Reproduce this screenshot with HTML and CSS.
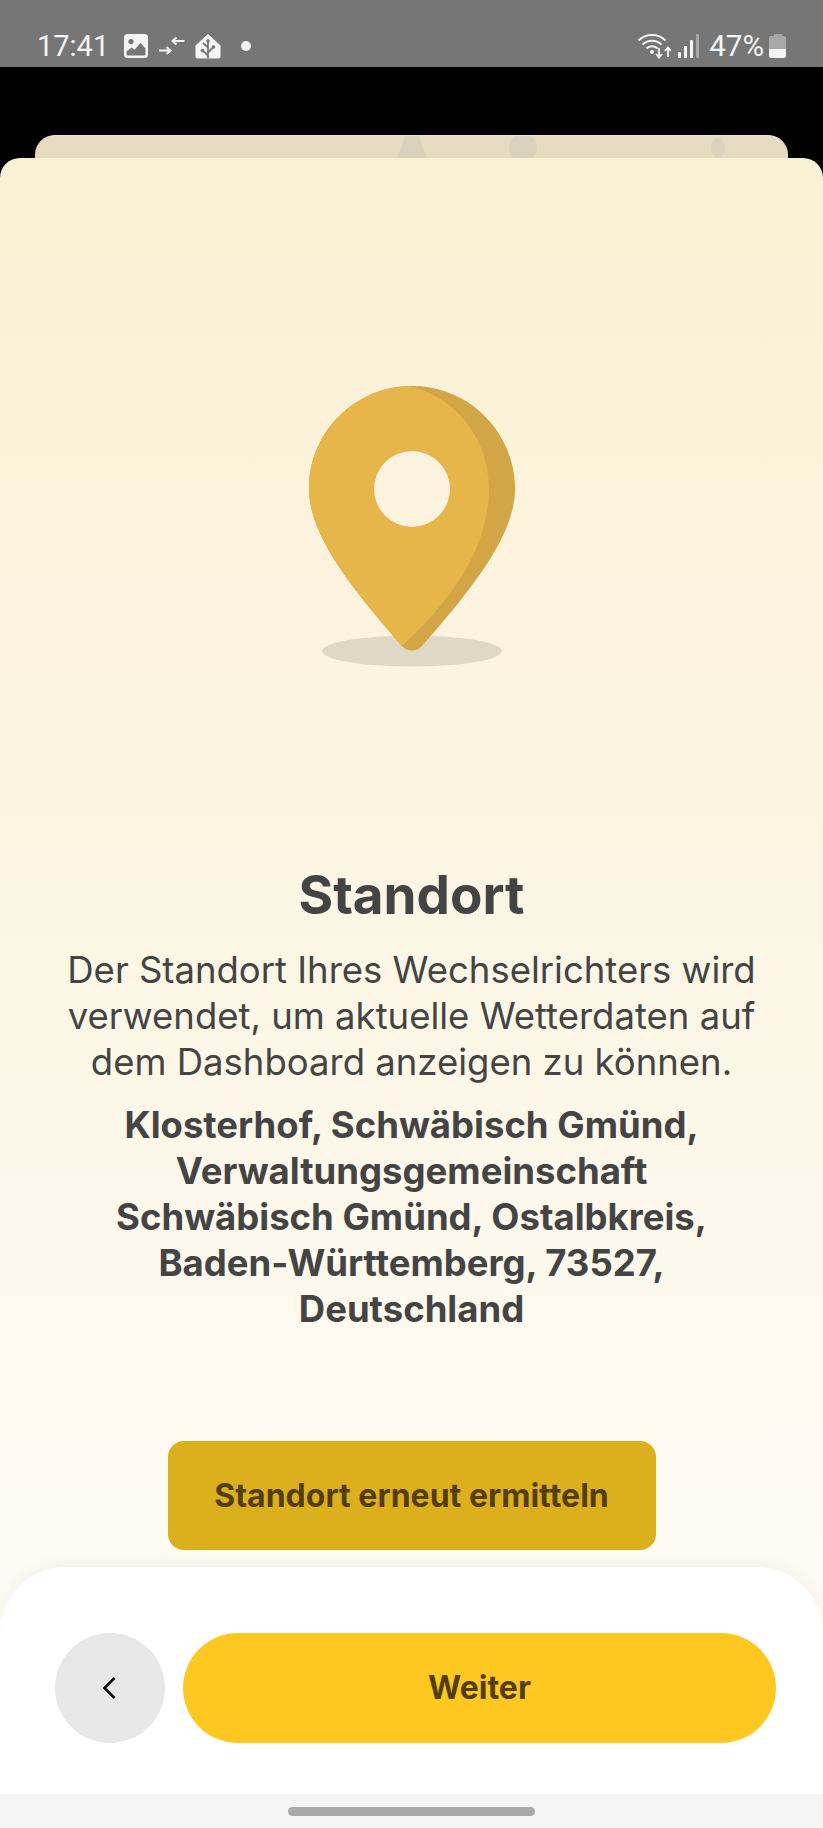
FILE: index.html
```html
<!DOCTYPE html>
<html lang="de">
<head>
    <meta charset="UTF-8">
    <meta name="viewport" content="width=device-width, initial-scale=1.0">
    <title>Standort</title>
    <link rel="stylesheet" href="styles.css">
</head>
<body>
    <div class="status-bar">
        <div class="status-left">
            <span class="clock">17:41</span>
            <svg class="icon-image" width="24" height="24" viewBox="0 0 24 24">
                <rect x="0" y="0" width="24" height="24" rx="3.5" fill="#f4f4f4"/>
                <circle cx="7" cy="7.5" r="2.6" fill="#767676"/>
                <path d="M2.500 20v-2.500l5-4 3 2.200 6-6.700 5 5.500V20q0 1.500-1.500 1.500H4q-1.500 0-1.500-1.500z" fill="#767676"/>
            </svg>
            <svg class="icon-sync" width="26" height="20" viewBox="0 0 26 20">
                <path d="M0 14.500h11M7.500 11l4 3.500-4 3.500M25.500 5H14M17.500 1.500l-4 3.500 4 3.500" fill="none" stroke="#f4f4f4" stroke-width="2"/>
            </svg>
            <svg class="icon-home" width="26" height="25" viewBox="0 0 26 25">
                <path d="M13 0 25.500 11.500V22.500q0 2-2 2H2.500q-2 0-2-2V11.500z" fill="#f4f4f4"/>
                <path d="M13 24.500V7M13 13.500 8 9M13 18.500l5-5M13 21.500 8 17" fill="none" stroke="#767676" stroke-width="1.800"/>
                <circle cx="13" cy="7" r="1.800" fill="#767676"/>
                <circle cx="7.500" cy="16.500" r="1.800" fill="#767676"/>
                <circle cx="18.500" cy="13" r="1.800" fill="#767676"/>
            </svg>
            <span class="dot"></span>
        </div>
        <div class="status-right">
            <svg class="icon-wifi" width="34" height="26" viewBox="0 0 34 26">
                <path d="M1.500 7.500C9 0 21 0 28.500 7.500M5.500 11.500C11 6.500 19 6.500 24.500 11.500M9.500 15.500C12.500 12.500 17.500 12.500 20.500 15.500" fill="none" stroke="#f4f4f4" stroke-width="2"/>
                <circle cx="15" cy="19" r="2" fill="#f4f4f4"/>
                <path d="M22 15v9M19 21l3 3.500 3-3.500M31 24v-9M28 18l3-3.500 3 3.500" fill="none" stroke="#f4f4f4" stroke-width="1.800"/>
            </svg>
            <svg class="icon-signal" width="21" height="24" viewBox="0 0 21 24">
                <rect x="0" y="18" width="3" height="6" rx="1" fill="#f4f4f4"/>
                <rect x="6" y="12" width="3" height="12" rx="1" fill="#f4f4f4"/>
                <rect x="12" y="6" width="3" height="18" rx="1" fill="#f4f4f4"/>
                <rect x="18" y="0" width="3" height="24" rx="1" fill="#a8a8a8"/>
            </svg>
            <span class="battery-text">47%</span>
            <div class="battery">
                <div class="battery-cap"></div>
                <div class="battery-body"></div>
            </div>
        </div>
    </div>

    <div class="back-card">
        <svg class="back-art" width="753" height="23" viewBox="0 0 753 23">
            <path d="M370 0h14l8 23H362z" fill="#d9d3bd"/>
            <circle cx="488" cy="12" r="14" fill="#d9d3bd"/>
            <ellipse cx="683" cy="12" rx="7" ry="10" fill="#d9d3bd"/>
            <ellipse cx="668" cy="24" rx="10" ry="2" fill="#d9d3bd"/>
            <ellipse cx="702" cy="24" rx="8" ry="2" fill="#d9d3bd"/>
        </svg>
    </div>

    <div class="card">
        <div class="pin-area">
            <svg class="pin" width="206" height="282" viewBox="0 0 206 282">
                <ellipse cx="103" cy="265" rx="90" ry="15.500" fill="#dfd8c5"/>
                <path d="M103 0C46 0 0 46 0 103C0 150 45 205 93 260C98 266 108 266 113 260C161 205 206 150 206 103C206 46 160 0 103 0z" fill="#d2a644"/>
                <path d="M103 0C46 0 0 46 0 103C0 150 45 205 93 260C132 224 180 170 180 102C180 48 140 6 97 .2z" fill="#e6b64b"/>
                <circle cx="103" cy="103" r="38" fill="#fcf3de"/>
            </svg>
        </div>

        <div class="content">
            <h1 class="title">Standort</h1>
            <p class="description">Der Standort Ihres Wechselrichters wird verwendet, um aktuelle Wetterdaten auf dem Dashboard anzeigen zu können.</p>
            <p class="address">Klosterhof, Schwäbisch Gmünd, Verwaltungsgemeinschaft Schwäbisch Gmünd, Ostalbkreis, Baden-Württemberg, 73527, Deutschland</p>
            <button class="retry-button">Standort erneut ermitteln</button>
        </div>

        <div class="footer">
            <button class="back-button">
                <svg width="16" height="24" viewBox="0 0 16 24">
                    <path d="M12.500 2 2.500 12l10 10" fill="none" stroke="#111" stroke-width="2.600"/>
                </svg>
            </button>
            <button class="next-button">Weiter</button>
        </div>
    </div>

    <div class="nav-bar">
        <div class="nav-handle"></div>
    </div>
</body>
</html>
```

FILE: styles.css
```css
* {
    box-sizing: border-box;
}

body {
    margin: 0;
    height: 1828px;
    display: flex;
    flex-direction: column;
    font-family: Inter, "Liberation Sans", sans-serif;
    background-color: #000;
    color: #444;
    overflow: hidden;
}

button {
    border: none;
    font-family: inherit;
    cursor: pointer;
}

/* status bar */
.status-bar {
    height: 67px;
    flex: none;
    background-color: #767676;
    color: #f4f4f4;
    display: flex;
    justify-content: space-between;
    align-items: center;
    padding: 25px 37px 0 37px;
}

.status-left,
.status-right {
    display: flex;
    align-items: center;
}

.clock {
    font-family: Roboto, sans-serif;
    font-size: 29px;
    margin-right: 15px;
}

.icon-sync {
    margin: 0 10px 0 11px;
}

.dot {
    width: 10px;
    height: 10px;
    border-radius: 50%;
    background-color: #f4f4f4;
    margin-left: 20px;
}

.icon-signal {
    margin: 0 10px 0 7px;
}

.battery-text {
    font-family: Roboto, sans-serif;
    font-size: 29.5px;
    margin-right: 5px;
}

.battery {
    width: 17px;
    height: 24px;
    display: flex;
    flex-direction: column;
    align-items: center;
}

.battery-cap {
    width: 8px;
    height: 2px;
    background-color: #a8a8a8;
    border-radius: 1px 1px 0 0;
}

.battery-body {
    flex: 1;
    width: 100%;
    border-radius: 2px;
    background: linear-gradient(#a8a8a8 58%, #f4f4f4 58%);
}

/* card stack */
.back-card {
    flex: none;
    height: 40px;
    margin: 68px 35px -17px;
    background-color: #e6dbc0;
    border-top: 1px solid #f0e7cf;
    border-radius: 20px 20px 0 0;
    overflow: hidden;
}

.back-art {
    display: block;
}

.card {
    flex: 1;
    position: relative;
    display: flex;
    flex-direction: column;
    background: linear-gradient(#faf0d3, #fefcf8);
    border-radius: 20px 20px 0 0;
}

.pin-area {
    height: 707px;
    padding-top: 228px;
    display: flex;
    justify-content: center;
}

.pin {
    display: block;
}

.content {
    flex: 1;
    display: flex;
    flex-direction: column;
    align-items: center;
    text-align: center;
    padding: 0 60px;
}

.title {
    margin: 0 0 22px;
    font-size: 53px;
    line-height: 60px;
    font-weight: 700;
}

.description {
    margin: 0 0 17px;
    font-size: 36.5px;
    line-height: 46px;
    font-weight: 400;
}

.address {
    margin: 0;
    max-width: 640px;
    font-size: 36.5px;
    line-height: 46px;
    font-weight: 700;
}

.retry-button {
    margin-top: 109px;
    width: 488px;
    height: 109px;
    flex: none;
    border-radius: 16px;
    background-color: #dcb01c;
    color: #533d08;
    font-size: 32px;
    font-weight: 700;
}

/* bottom buttons */
.footer {
    flex: none;
    height: 227px;
    background-color: #fff;
    border-radius: 66px 66px 0 0;
    padding: 66px 47px 0 55px;
    display: flex;
    gap: 18px;
    box-shadow: 0 -4px 16px rgba(120, 100, 40, 0.05);
}

.back-button {
    width: 110px;
    height: 110px;
    border-radius: 50%;
    background-color: #e8e8e8;
    display: flex;
    align-items: center;
    justify-content: center;
    padding: 0;
}

.next-button {
    flex: 1;
    height: 110px;
    padding-bottom: 3px;
    border-radius: 55px;
    background-color: #fec820;
    color: #533d08;
    font-size: 32px;
    font-weight: 700;
}

/* gesture bar */
.nav-bar {
    flex: none;
    height: 34px;
    background-color: #f5f5f5;
    display: flex;
    justify-content: center;
    padding-top: 13px;
}

.nav-handle {
    width: 247px;
    height: 9px;
    border-radius: 5px;
    background-color: #a9a9a9;
}
```
